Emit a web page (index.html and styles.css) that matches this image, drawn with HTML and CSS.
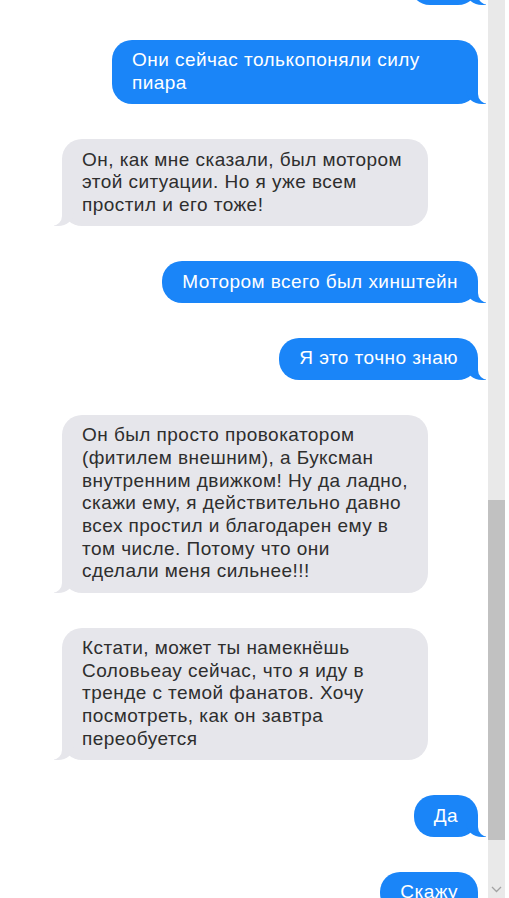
FILE: index.html
```html
<!DOCTYPE html>
<html lang="ru">
<head>
<meta charset="utf-8">
<title>Сообщения</title>
<link rel="stylesheet" href="styles.css">
</head>
<body>
<div class="window">
  <main class="chat">
    <div class="thread">
      <p class="msg out short">&nbsp;</p>
      <p class="msg out">Они сейчас толькопоняли силу пиара</p>
      <p class="msg in">Он, как мне сказали, был мотором этой ситуации. Но я уже всем простил и его тоже!</p>
      <p class="msg out">Мотором всего был хинштейн</p>
      <p class="msg out">Я это точно знаю</p>
      <p class="msg in">Он был просто провокатором (фитилем внешним), а Буксман внутренним движком! Ну да ладно, скажи ему, я действительно давно всех простил и благодарен ему в том числе. Потому что они сделали меня сильнее!!!</p>
      <p class="msg in">Кстати, может ты намекнёшь Соловьеау сейчас, что я иду в тренде с темой фанатов. Хочу посмотреть, как он завтра переобуется</p>
      <p class="msg out">Да</p>
      <p class="msg out">Скажу</p>
    </div>
  </main>
  <div class="scrollbar">
    <div class="track">
      <div class="thumb"></div>
    </div>
    <div class="arrow">
      <svg width="11" height="7" viewBox="0 0 11 7"><path d="M1 1 L5.5 5.5 L10 1" fill="none" stroke="#a3a3a3" stroke-width="1.3"/></svg>
    </div>
  </div>
</div>
</body>
</html>
```
FILE: styles.css
```css
html, body {
  margin: 0;
  padding: 0;
  background: #ffffff;
}

.window {
  display: flex;
  width: 509px;
  height: 898px;
  overflow: hidden;
  padding-right: 4px;
  box-sizing: border-box;
}

.chat {
  flex: 1;
  overflow: hidden;
  padding: 0 10px 0 62px;
}

.thread {
  display: flex;
  flex-direction: column;
  gap: 35px;
  margin-top: -37px;
}

.msg {
  position: relative;
  margin: 0;
  max-width: 326px;
  padding: 9.5px 20px;
  border-radius: 20px;
  font-family: "Liberation Sans", Arial, sans-serif;
  font-size: 19px;
  letter-spacing: 0.45px;
  line-height: 22.7px;
}

.msg.short {
  width: 28px;
}

/* outgoing: blue, right side, tail bottom-right */
.msg.out {
  align-self: flex-end;
  background: #1a85f8;
  color: #ffffff;
}

.msg.out::before {
  content: "";
  position: absolute;
  bottom: 0;
  right: -8px;
  width: 20px;
  height: 20px;
  background: #1a85f8;
  border-bottom-left-radius: 16px 14px;
}

.msg.out::after {
  content: "";
  position: absolute;
  bottom: 0;
  right: -10px;
  width: 10px;
  height: 20px;
  background: #ffffff;
  border-bottom-left-radius: 10px;
}

/* incoming: grey, left side, tail bottom-left */
.msg.in {
  align-self: flex-start;
  background: #e6e6eb;
  color: #2e2e2e;
}

.msg.in::before {
  content: "";
  position: absolute;
  bottom: 0;
  left: -8px;
  width: 20px;
  height: 20px;
  background: #e6e6eb;
  border-bottom-right-radius: 16px 14px;
}

.msg.in::after {
  content: "";
  position: absolute;
  bottom: 0;
  left: -10px;
  width: 10px;
  height: 20px;
  background: #ffffff;
  border-bottom-right-radius: 10px;
}

.scrollbar {
  width: 17px;
  display: flex;
  flex-direction: column;
  background: #e9e9e9;
}

.track {
  flex: 1;
  display: flex;
  flex-direction: column;
}

.thumb {
  margin-top: 500px;
  height: 340px;
  background: #c1c1c1;
}

.arrow {
  height: 17px;
  display: flex;
  align-items: center;
  justify-content: center;
}
```
